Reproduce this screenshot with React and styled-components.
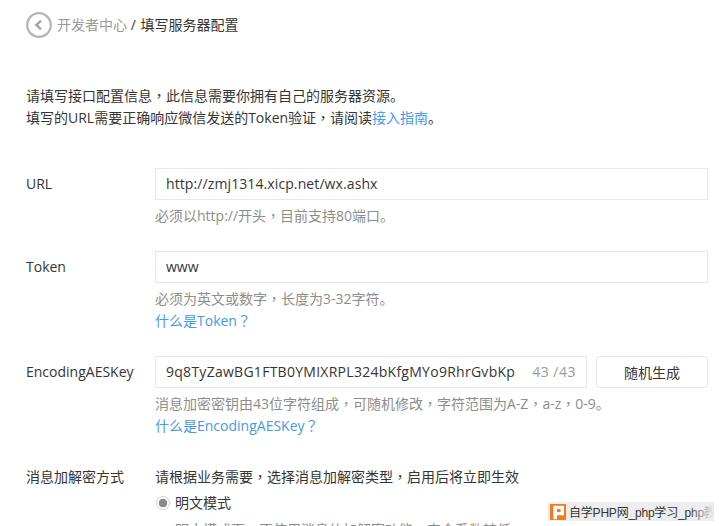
import React from "react";
import styled, { createGlobalStyle } from "styled-components";

const FONT = `"Open Sans", "Noto Sans CJK SC", sans-serif`;

const GlobalStyle = createGlobalStyle`
  html, body {
    margin: 0;
    height: 526px;
    overflow: hidden;
    background: #fff;
  }
  body {
    font-family: ${FONT};
    font-size: 14px;
    color: #353535;
  }
`;

const Page = styled.div`
  position: relative;
  height: 526px;
  padding: 12px 11px 0 26px;
  box-sizing: border-box;
  overflow: hidden;
`;

const Header = styled.div`
  display: flex;
  align-items: center;
  height: 26px;
  gap: 5px;
  line-height: 26px;
`;

const BackButton = styled.a`
  display: flex;
  width: 26px;
  height: 26px;
`;

const Crumb = styled.a`
  color: #9a9a9a;
`;

const CurrentTitle = styled.span`
  margin-left: 1px;
`;

const Intro = styled.p`
  margin: 47px 0 0;
  line-height: 22px;
`;

const Link = styled.a`
  color: #459ae9;
`;

// full width punctuation sits centred in the cell, as in the TC cut of the font
const Punct = styled.span`
  font-family: "Noto Sans CJK TC", sans-serif;
  line-height: 0;
`;

const Form = styled.div`
  display: flex;
  flex-direction: column;
  margin-top: 39px;
`;

const Row = styled.div`
  display: grid;
  grid-template-columns: 129px 1fr;
  margin-bottom: ${({ $gap }) => $gap}px;
`;

const Label = styled.label`
  line-height: 32px;
  white-space: nowrap;
`;

const PlainLabel = styled(Label)`
  line-height: 22px;
`;

const Field = styled.div`
  display: flex;
  flex-direction: column;
  min-width: 0;
`;

const InputLine = styled.div`
  display: flex;
  gap: 9px;
`;

const InputBox = styled.div`
  flex: 1;
  display: flex;
  justify-content: space-between;
  height: 32px;
  line-height: 30px;
  padding: 0 10px;
  box-sizing: border-box;
  border: 1px solid #e7e7eb;
  white-space: nowrap;
  letter-spacing: ${({ $spacing = 0 }) => $spacing}px;
`;

const Counter = styled.span`
  color: #9a9a9a;
  letter-spacing: 0.5px;
`;

const Button = styled.button`
  width: 112px;
  height: 32px;
  padding: 0;
  background: #fff;
  border: 1px solid #e7e7eb;
  border-radius: 3px;
  color: #353535;
  font: inherit;
`;

const Hint = styled.div`
  margin-top: 5px;
  line-height: 22px;
  color: #8d8d8d;
  white-space: nowrap;
`;

const OptionHint = styled(Hint)`
  padding-left: 20px;
`;

const HelpLink = styled(Link)`
  line-height: 22px;
`;

const Description = styled.div`
  line-height: 22px;
`;

const RadioRow = styled.div`
  display: flex;
  align-items: center;
  gap: 5px;
  margin-top: 4px;
  line-height: 22px;
`;

const Radio = styled.span`
  width: 14px;
  height: 14px;
  margin-left: 1px;
  box-sizing: border-box;
  border: 1px solid #d0d0d0;
  border-radius: 50%;
  background: radial-gradient(circle, #8a8a8a 0 4px, #fff 4.6px);
`;

const Watermark = styled.div`
  position: absolute;
  left: 548px;
  top: 502px;
  width: 166px;
  height: 19px;
  display: flex;
  align-items: center;
  gap: 3px;
  padding-left: 2px;
  box-sizing: border-box;
  background: #ededed;
  font-family: "Liberation Sans", "Noto Sans CJK SC", sans-serif;
  font-size: 12px;
  letter-spacing: -0.2px;
  color: #333;
  white-space: nowrap;
  overflow: hidden;

  svg {
    flex-shrink: 0;
  }

  &::after {
    content: "";
    position: absolute;
    top: 0;
    right: 0;
    width: 26px;
    height: 100%;
    background: linear-gradient(to right, rgba(237, 237, 237, 0), #ededed);
  }
`;

const BackIcon = () => (
  <svg width="26" height="26" viewBox="0 0 26 26" fill="none">
    <circle cx="13" cy="13" r="11.8" stroke="#b6b6ba" strokeWidth="2.3" />
    <path d="M15 8.6 10.4 13l4.6 4.4" stroke="#a8a8ac" strokeWidth="2.6" />
  </svg>
);

const PhpLogo = () => (
  <svg width="16" height="16" viewBox="0 0 16 16">
    <rect width="16" height="16" fill="#f47b20" />
    <path d="M3.3 15.3V1.7H14v9.6H7v4ZM7 5v3h3.5V5Z" fill="#fff" fillRule="evenodd" />
  </svg>
);

export default function App() {
  return (
    <Page>
      <GlobalStyle />
      <Header>
        <BackButton>
          <BackIcon />
        </BackButton>
        <span>
          <Crumb>开发者中心</Crumb> / <CurrentTitle>填写服务器配置</CurrentTitle>
        </span>
      </Header>
      <Intro>
        请填写接口配置信息<Punct>，</Punct>此信息需要你拥有自己的服务器资源。
        <br />
        填写的URL需要正确响应微信发送的Token验证<Punct>，</Punct>请阅读<Link>接入指南</Link>。
      </Intro>
      <Form>
        <Row $gap={24}>
          <Label>URL</Label>
          <Field>
            <InputBox $spacing={0.1}>http://zmj1314.xicp.net/wx.ashx</InputBox>
            <Hint>必须以http://开头<Punct>，</Punct>目前支持80端口。</Hint>
          </Field>
        </Row>
        <Row $gap={24}>
          <Label>Token</Label>
          <Field>
            <InputBox>www</InputBox>
            <Hint>必须为英文或数字<Punct>，</Punct>长度为3-32字符。</Hint>
            <HelpLink>什么是Token<Punct>？</Punct></HelpLink>
          </Field>
        </Row>
        <Row $gap={29}>
          <Label>EncodingAESKey</Label>
          <Field>
            <InputLine>
              <InputBox $spacing={0.27}>
                9q8TyZawBG1FTB0YMIXRPL324bKfgMYo9RhrGvbKp
                <Counter>43 /43</Counter>
              </InputBox>
              <Button>随机生成</Button>
            </InputLine>
            <Hint>
              消息加密密钥由43位字符组成<Punct>，</Punct>可随机修改<Punct>，</Punct>字符范围为A-Z<Punct>，</Punct>a-z<Punct>，</Punct>0-9。
            </Hint>
            <HelpLink>什么是EncodingAESKey<Punct>？</Punct></HelpLink>
          </Field>
        </Row>
        <Row $gap={0}>
          <PlainLabel>消息加解密方式</PlainLabel>
          <Field>
            <Description>
              请根据业务需要<Punct>，</Punct>选择消息加解密类型<Punct>，</Punct>启用后将立即生效
            </Description>
            <RadioRow>
              <Radio />
              明文模式
            </RadioRow>
            <OptionHint>明文模式下<Punct>，</Punct>不使用消息体加解密功能<Punct>，</Punct>安全系数较低</OptionHint>
          </Field>
        </Row>
      </Form>
      <Watermark>
        <PhpLogo />
        自学PHP网_php学习_php教程
      </Watermark>
    </Page>
  );
}
